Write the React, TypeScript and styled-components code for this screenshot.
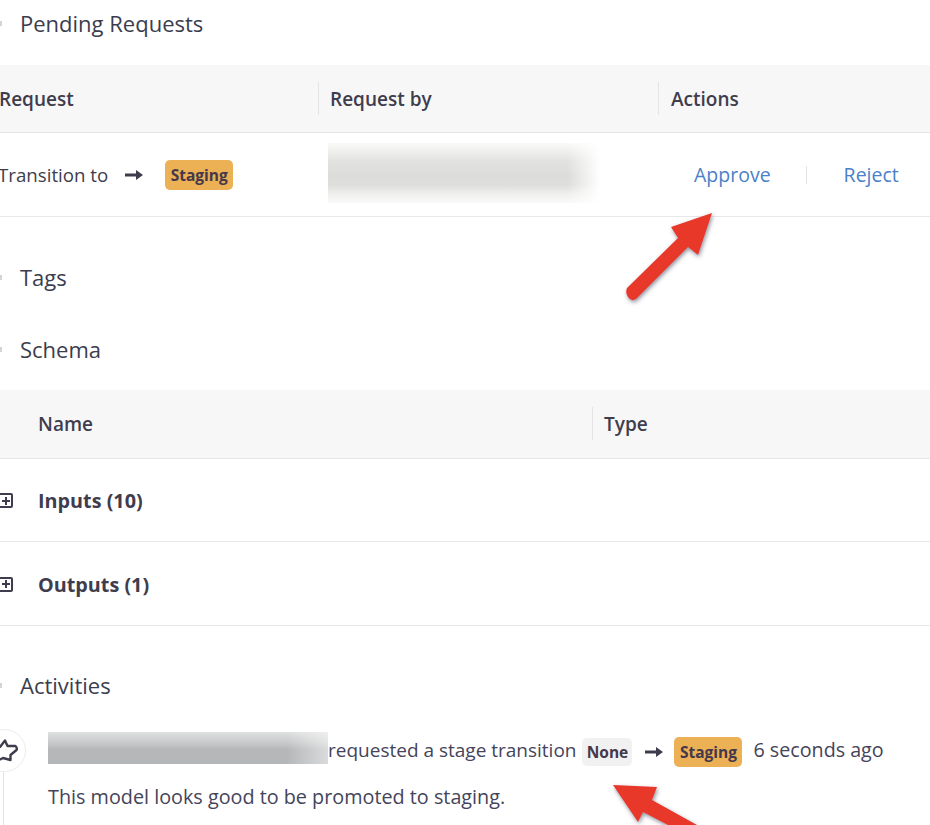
import React from "react";
import styled, { createGlobalStyle } from "styled-components";

const Global = createGlobalStyle`
  html, body { margin: 0; padding: 0; background: #fff; }
  body { font-family: "Open Sans", "Noto Sans", "Liberation Sans", sans-serif; color: #3f3d4d; overflow: hidden; }
`;

const Page = styled.div`
  position: relative;
  width: 930px;
  height: 825px;
  overflow: hidden;
  background: #fff;
`;

const SectionTitle = styled.h2<{ $h: number; $top?: number }>`
  position: relative;
  box-sizing: border-box;
  margin: ${(p) => p.$top ?? 0}px 0 0;
  height: ${(p) => p.$h}px;
  display: flex;
  align-items: center;
  padding: 0 0 2px 20px;
  font-size: 22px;
  font-weight: 400;
  color: #3b3d4e;
  &::before {
    content: "";
    position: absolute;
    left: 0;
    top: calc(50% - 3px);
    width: 2px;
    height: 5px;
    background: #d4d4d6;
  }
`;

const Table = styled.div<{ $columns: string; $top: number }>`
  margin-top: ${(p) => p.$top}px;
  display: grid;
  grid-template-columns: ${(p) => p.$columns};
`;

const HeadCell = styled.div<{ $pad: number; $sep?: boolean; $h?: number }>`
  position: relative;
  height: ${(p) => p.$h ?? 68}px;
  box-sizing: border-box;
  display: flex;
  align-items: center;
  padding-left: ${(p) => p.$pad}px;
  background: #f7f7f7;
  border-bottom: 1px solid #e6e6e6;
  font-size: 19px;
  font-weight: 600;
  color: #3f3d4d;
  &::before {
    content: "";
    display: ${(p) => (p.$sep ? "block" : "none")};
    position: absolute;
    left: 0;
    top: 17px;
    height: 33px;
    width: 1px;
    background: #e4e4e4;
  }
`;

const ClippedLabel = styled.span`
  margin-left: -1px;
`;

const BodyCell = styled.div`
  height: 84px;
  box-sizing: border-box;
  display: flex;
  align-items: center;
  border-bottom: 1px solid #e8e8e8;
  font-size: 18.7px;
`;

const RequestCell = styled(BodyCell)`
  margin-left: -2px;
  gap: 16px;
  & > svg { margin: 0 6px 0 1px; }
`;

const ByCell = styled(BodyCell)`
  padding-left: 10px;
`;

const ActionsCell = styled(BodyCell)`
  padding-left: 36px;
`;

const BlurName = styled.div`
  width: 272px;
  height: 60px;
  margin-top: -3px;
  background:
    linear-gradient(90deg, rgba(255, 255, 255, 0) 88%, rgba(255, 255, 255, 1) 100%),
    linear-gradient(180deg, #fafafa 0%, #f2f2f1 10%, #e2e2e0 30%, #dcdcda 55%, #dededc 70%, #efefee 85%, #fafafa 100%);
`;

const ActionLink = styled.a`
  color: #4a7fc9;
  font-size: 19.5px;
  font-weight: 400;
`;

const ActionDivider = styled.span`
  width: 1px;
  height: 18px;
  margin: 0 37px 0 35px;
  background: #e4e4e4;
`;

const Tag = styled.span<{ $gold?: boolean }>`
  display: inline-flex;
  align-items: center;
  justify-content: center;
  box-sizing: border-box;
  flex: none;
  width: ${(p) => (p.$gold ? 68 : 50)}px;
  height: ${(p) => (p.$gold ? 30 : 28)}px;
  border-radius: 5px;
  background: ${(p) => (p.$gold ? "#ecb055" : "#f1f1f1")};
  font-size: 15.5px;
  font-weight: 700;
  color: #44384a;
`;

const ArrowGlyph = styled.svg`
  width: 18px;
  height: 10px;
  flex: none;
  fill: #3f3d4d;
`;

const SchemaRow = styled.div<{ $h: number }>`
  height: ${(p) => p.$h}px;
  box-sizing: border-box;
  display: flex;
  align-items: center;
  gap: 25px;
  margin-left: -1px;
  padding-top: 1px;
  border-bottom: 1px solid #e8e8e8;
  font-size: 19.8px;
  font-weight: 700;
  color: #3f3d4d;
`;

const Expander = styled.span`
  position: relative;
  width: 15px;
  height: 15px;
  box-sizing: border-box;
  border: 2px solid #3f3d4d;
  border-radius: 2px;
  margin-left: -1px;
  flex: none;
  &::before {
    content: "";
    position: absolute;
    left: 1.5px;
    right: 1.5px;
    top: 4.5px;
    height: 2px;
    background: #3f3d4d;
  }
  &::after {
    content: "";
    position: absolute;
    top: 1.5px;
    bottom: 1.5px;
    left: 4.5px;
    width: 2px;
    background: #3f3d4d;
  }
`;

const Activity = styled.div`
  position: relative;
  padding: 17px 0 0 48px;
`;

const Avatar = styled.div`
  position: absolute;
  left: -17px;
  top: 13px;
  width: 43px;
  height: 43px;
  box-sizing: border-box;
  border: 1.5px solid #ececec;
  border-radius: 50%;
  display: flex;
  align-items: center;
  justify-content: center;
  background: #fff;
`;

const TimelineLine = styled.div`
  position: absolute;
  left: 3px;
  top: 56px;
  width: 1px;
  height: 60px;
  background: #e2e2e2;
`;

const ActivityLine = styled.div`
  height: 38px;
  display: flex;
  align-items: center;
  font-size: 19px;
  color: #44445a;
`;

const BlurUser = styled.div`
  width: 280px;
  height: 32px;
  flex: none;
  margin-top: -8px;
  background:
    linear-gradient(90deg, rgba(255, 255, 255, 0) 85%, rgba(255, 255, 255, 0.5) 100%),
    linear-gradient(180deg, #dfe0e0 0%, #c6c8c9 35%, #b5b7b9 55%, #b4b6b8 100%);
`;

const Action = styled.span`
  margin: 0 6px 5px 0;
  white-space: nowrap;
`;

const TimeAgo = styled.span`
  margin-bottom: 5px;
  font-size: 19.7px;
  white-space: nowrap;
`;

const Transition = styled.span`
  display: flex;
  align-items: center;
  gap: 11px;
  margin: 0 11px 0 13px;
`;

const Message = styled.p`
  margin: 13px 0 0;
  font-size: 19.8px;
  line-height: 26px;
  color: #44445a;
`;

const AvatarIcon = styled.svg`
  width: 24px;
  height: 24px;
  margin-left: 8px;
  fill: none;
  stroke: #3f3d4d;
  stroke-width: 2.4;
  stroke-linejoin: round;
`;

const Annotation = styled.svg`
  position: absolute;
  left: 0;
  top: 0;
  width: 930px;
  height: 825px;
  pointer-events: none;
`;

const Arrow = () => (
  <ArrowGlyph viewBox="0 0 18 10">
    <path d="M0 3.5h11V0l7 5-7 5V6.5H0z" />
  </ArrowGlyph>
);

const P1 = "M712 213 L671 227 L678 238 L627 288 Q625 293 628 297 Q631 302 636 299 L688 247 L698 255 Z";
const P2 = "M613 785 L657 787 L652 800 L697 825 L668 825 L643 812 L638 822 Z";

export default function App() {
  return (
    <Page>
      <Global />
      <SectionTitle $h={48}>Pending Requests</SectionTitle>
      <Table $columns="318px 340px 272px" $top={17}>
        <HeadCell $pad={0}><ClippedLabel>Request</ClippedLabel></HeadCell>
        <HeadCell $pad={12} $sep>Request by</HeadCell>
        <HeadCell $pad={13} $sep>Actions</HeadCell>
        <RequestCell>
          Transition to
          <Arrow />
          <Tag $gold>Staging</Tag>
        </RequestCell>
        <ByCell><BlurName /></ByCell>
        <ActionsCell>
          <ActionLink>Approve</ActionLink>
          <ActionDivider />
          <ActionLink>Reject</ActionLink>
        </ActionsCell>
      </Table>
      <SectionTitle $h={72} $top={25}>Tags</SectionTitle>
      <SectionTitle $h={72}>Schema</SectionTitle>
      <Table $columns="592px 338px" $top={4}>
        <HeadCell $pad={38} $h={69}>Name</HeadCell>
        <HeadCell $pad={12} $h={69} $sep>Type</HeadCell>
      </Table>
      <SchemaRow $h={83}><Expander />Inputs (10)</SchemaRow>
      <SchemaRow $h={84}><Expander />Outputs (1)</SchemaRow>
      <SectionTitle $h={60} $top={30}>Activities</SectionTitle>
      <Activity>
        <Avatar>
          <AvatarIcon viewBox="0 0 24 24">
            <path d="M0 8 L3 8 L8 1.5 L10.5 7 L18.5 7 Q20.5 9 19.5 11 L13.5 16 L13.5 21 L6 19 L0 22" />
          </AvatarIcon>
        </Avatar>
        <TimelineLine />
        <ActivityLine>
          <BlurUser />
          <Action>requested a stage transition</Action>
          <Tag>None</Tag>
          <Transition><Arrow /><Tag $gold>Staging</Tag></Transition>
          <TimeAgo>6 seconds ago</TimeAgo>
        </ActivityLine>
        <Message>This model looks good to be promoted to staging.</Message>
      </Activity>
      <Annotation viewBox="0 0 930 825">
        <defs>
          <filter id="sh" x="-20%" y="-20%" width="140%" height="140%">
            <feDropShadow dx="1" dy="2" stdDeviation="2" floodColor="#50566a" floodOpacity="0.65" />
          </filter>
        </defs>
        <path d={P1} fill="#e7392c" filter="url(#sh)" />
        <path d={P2} fill="#e7392c" filter="url(#sh)" />
      </Annotation>
    </Page>
  );
}
